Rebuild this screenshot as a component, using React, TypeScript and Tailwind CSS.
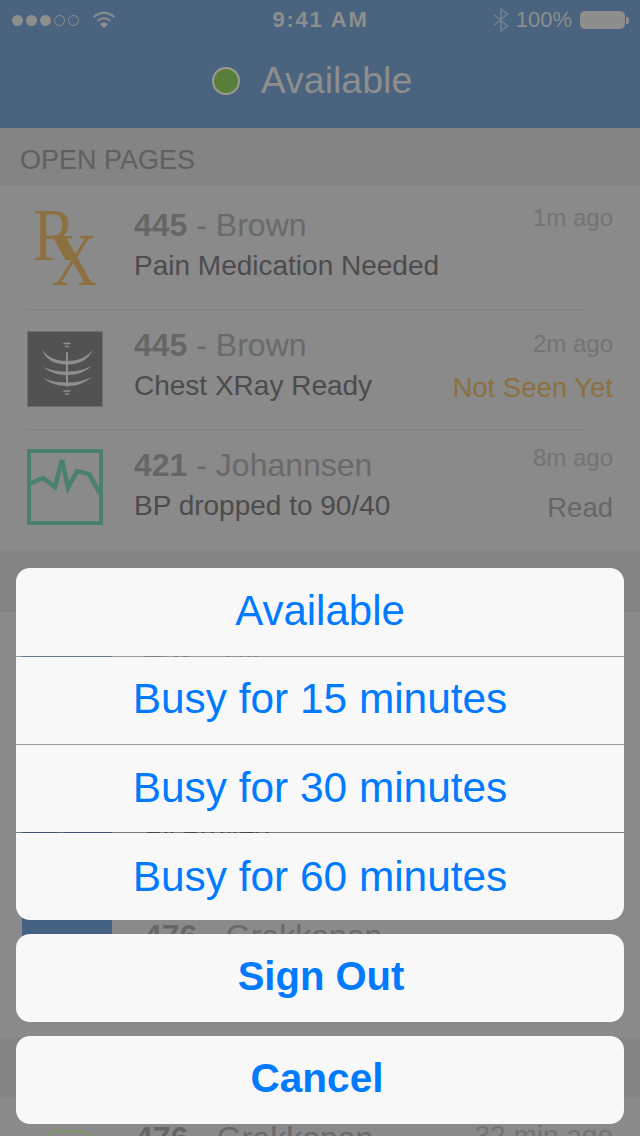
import React from "react";

type PageRow = {
  room: string;
  name: string;
  message: string;
  time: string;
  timeClass: string;
  iconClass: string;
  status?: string;
  statusClass?: string;
  icon: React.ReactNode;
};

function RxIcon() {
  return (
    <div className="relative h-[76px] w-[76px] font-['Liberation_Serif',serif] text-[#8c7040]">
      <span className="absolute left-[6px] top-[-15px] scale-y-[1.14] text-[64px] leading-[80px]">R</span>
      <span className="absolute left-[25px] top-[9px] scale-y-[1.18] text-[62px] leading-[80px]">X</span>
    </div>
  );
}

function XrayIcon() {
  return (
    <svg width="76" height="76" viewBox="0 0 76 76" className="block">
      <rect x="0.5" y="0.5" width="75" height="75" fill="#525252" stroke="#6e6e6e" />
      <g fill="#8f8f8f">
        <path d="M15 18 Q22 30 40 30 Q58 30 66 18 Q60 33.5 40 33.5 Q20 33.5 15 18Z" />
        <path d="M16 36 Q28 41 40 40.5 Q52 41 65 35 Q54 44.5 40 44 Q27 44.5 16 36Z" />
        <path d="M16 47 Q28 52 40 51.5 Q52 52 65 46 Q54 55.5 40 55 Q27 55.5 16 47Z" />
      </g>
      <g fill="none" stroke="#8f8f8f" strokeLinecap="round">
        <path d="M40 22 L40 55" strokeWidth="2" />
        <path d="M37 12.5 L43 12.5 M38.5 15.5 L41.5 15.5 M37 60 L43 60 M38.5 63 L41.5 63" strokeWidth="1.5" />
      </g>
    </svg>
  );
}

function ChartIcon() {
  return (
    <svg width="76" height="76" viewBox="0 0 76 76" className="block">
      <rect x="2" y="2" width="72" height="72" fill="none" stroke="#4a8070" strokeWidth="4" />
      <polyline
        points="3,34.5 16,29 28,38 35,11 41,39 50,22 62,25 73,45"
        fill="none"
        stroke="#4a8070"
        strokeWidth="4.5"
      />
    </svg>
  );
}

function Name({ room, name }: { room: string; name: string }) {
  return (
    <div className="text-[32px] leading-[36px] text-[#696969]">
      <span className="font-bold text-[#666666]">{room}</span> - {name}
    </div>
  );
}

const openPages: PageRow[] = [
  {
    room: "445",
    name: "Brown",
    message: "Pain Medication Needed",
    time: "1m ago",
    timeClass: "mt-[12px]",
    iconClass: "mt-[21px]",
    icon: <RxIcon />,
  },
  {
    room: "445",
    name: "Brown",
    message: "Chest XRay Ready",
    time: "2m ago",
    timeClass: "mt-[18px]",
    iconClass: "mt-[21px]",
    status: "Not Seen Yet",
    statusClass: "mt-[12px] text-[#8c7040]",
    icon: <XrayIcon />,
  },
  {
    room: "421",
    name: "Johannsen",
    message: "BP dropped to 90/40",
    time: "8m ago",
    timeClass: "mt-[12px]",
    iconClass: "mt-[19px]",
    status: "Read",
    statusClass: "mt-[18px] text-[#666666]",
    icon: <ChartIcon />,
  },
];

function OpenRow({ row, last }: { row: PageRow; last: boolean }) {
  return (
    <div className="relative flex h-[120px] items-start pl-[27px] pr-[27px]">
      <div className={`w-[76px] shrink-0 ${row.iconClass}`}>{row.icon}</div>
      <div className="ml-[31px] min-w-0 flex-1 pt-[17px]">
        <Name room={row.room} name={row.name} />
        <div className="mt-[7px] text-[28px] leading-[32px] text-[#4c4c4c]">{row.message}</div>
      </div>
      <div className="flex flex-col items-end">
        <div className={`text-[24px] leading-[32px] text-[#737373] ${row.timeClass}`}>{row.time}</div>
        {row.status && <div className={`text-[27.5px] leading-[32px] ${row.statusClass}`}>{row.status}</div>}
      </div>
      {!last && <div className="absolute bottom-0 left-[26px] right-[55px] h-px bg-[#7f7f7f]" />}
    </div>
  );
}

function QueueRow({
  room,
  name,
  message,
  seam,
}: {
  room: string;
  name: string;
  message?: string;
  seam?: boolean;
}) {
  return (
    <div className="flex h-[142px] items-start pl-[22px]">
      <div className="mt-[8px] flex h-[114px] w-[90px] shrink-0 bg-[#456282]">
        {seam && <div className="ml-[36px] w-[6px] bg-[#5f7891]" />}
      </div>
      <div className="ml-[32px] pt-[22px]">
        <Name room={room} name={name} />
        {message && <div className="mt-[3px] text-[28px] leading-[32px] text-[#4c4c4c]">{message}</div>}
      </div>
    </div>
  );
}

function SheetButton({ label, className }: { label: string; className: string }) {
  return (
    <button
      className={`flex w-full items-center justify-center bg-[#f8f8f8] leading-none text-[#007aff] ${className}`}
    >
      {label}
    </button>
  );
}

function StatusBar() {
  return (
    <div className="flex h-[40px] items-center justify-between pl-[12px] pr-[11px] text-[#8e8e8e]">
      <div className="flex w-[200px] items-center">
        <div className="flex items-center gap-[3px]">
          <span className="h-[11px] w-[11px] rounded-full bg-[#8e8e8e]" />
          <span className="h-[11px] w-[11px] rounded-full bg-[#8e8e8e]" />
          <span className="h-[11px] w-[11px] rounded-full bg-[#8e8e8e]" />
          <span className="h-[11px] w-[11px] rounded-full border border-[#8e8e8e]" />
          <span className="h-[11px] w-[11px] rounded-full border border-[#8e8e8e]" />
        </div>
        <svg width="24" height="18" viewBox="0 0 24 18" className="ml-[13px]" fill="none" stroke="#8e8e8e" strokeWidth="2">
          <path d="M1.5 6 Q12 -2.5 22.5 6" />
          <path d="M5.5 10 Q12 4.5 18.5 10" />
          <path d="M12 17.5 L8 13 Q12 10 16 13 Z" fill="#8e8e8e" stroke="none" />
        </svg>
      </div>
      <div className="text-[22px] font-bold leading-none tracking-[1.8px]">9:41 AM</div>
      <div className="flex w-[200px] items-center justify-end">
        <svg width="16" height="24" viewBox="0 0 16 24" fill="none" stroke="#6e7f92" strokeWidth="1.6">
          <path d="M1 6.5 L14.5 18 L8 23 L8 1 L14.5 6 L1 17.5" />
        </svg>
        <span className="ml-[7px] text-[22px] leading-none">100%</span>
        <div className="ml-[8px] h-[18px] w-[45px] rounded-[5px] bg-[#8e8e8e]" />
        <div className="ml-[1px] h-[7px] w-[3px] rounded-r-[2px] bg-[#8e8e8e]" />
      </div>
    </div>
  );
}

export default function App() {
  return (
    <div className="relative h-[1136px] w-[640px] overflow-hidden bg-[#8a8a8a] font-['Liberation_Sans',Arial,sans-serif]">
      <header className="h-[128px] bg-[#4a637e]">
        <StatusBar />
        <div className="flex h-[82px] items-center justify-center pr-[16px]">
          <span className="h-[28px] w-[28px] rounded-full border-2 border-[#9a9a8e] bg-[#5a7f3a]" />
          <span className="ml-[21px] text-[37.5px] leading-none text-[#8e8e8e]">Available</span>
        </div>
      </header>

      <div className="flex h-[57px] items-center bg-[#848484] pl-[20px] pt-[7px] text-[27px] text-[#5f5f5f]">
        OPEN PAGES
      </div>
      <div className="h-[365px] pt-[5px]">
        {openPages.map((row, i) => (
          <OpenRow key={i} row={row} last={i === openPages.length - 1} />
        ))}
      </div>

      <div className="h-[62px] bg-[#848484]" />
      <div className="h-[426px]">
        <QueueRow room="432" name="Ali" />
        <QueueRow room="476" name="Grakkonen" message="All Arrived" seam />
        <QueueRow room="476" name="Grakkonen" />
      </div>

      <div className="h-[60px] bg-[#848484]" />
      <div className="relative flex pl-[41px]">
        <div className="mt-[32px] h-[60px] w-[57px] shrink-0 rounded-[18px] border-2 border-[#7d9a66]" />
        <div className="ml-[37px] pt-[22px]">
          <Name room="476" name="Grakkonen" />
        </div>
        <div className="absolute right-[27px] top-[22px] text-[28px] leading-[32px] text-[#737373]">32 min ago</div>
      </div>

      <div className="absolute inset-x-[16px] bottom-[12px] flex flex-col gap-[14px]">
        <div className="overflow-hidden rounded-[14px]">
          <SheetButton label="Available" className="h-[88px] pb-[2px] text-[42px]" />
          <div className="h-[1px] bg-white/15" />
          <SheetButton label="Busy for 15 minutes" className="h-[87px] pb-[2px] text-[42.4px]" />
          <div className="h-[1px] bg-white/15" />
          <SheetButton label="Busy for 30 minutes" className="h-[87px] text-[42.4px]" />
          <div className="h-[1px] bg-black/10" />
          <SheetButton label="Busy for 60 minutes" className="h-[87px] pt-[2px] text-[42.4px]" />
        </div>
        <button className="flex h-[88px] items-center justify-center rounded-[14px] bg-[#f8f8f8] pb-[4px] pl-[2px] text-[40px] font-bold leading-none text-[#007aff]">
          Sign Out
        </button>
        <button className="flex h-[88px] items-center justify-center rounded-[14px] bg-[#f8f8f8] pb-[4px] pr-[6px] text-[40.5px] font-bold leading-none text-[#007aff]">
          Cancel
        </button>
      </div>
    </div>
  );
}
